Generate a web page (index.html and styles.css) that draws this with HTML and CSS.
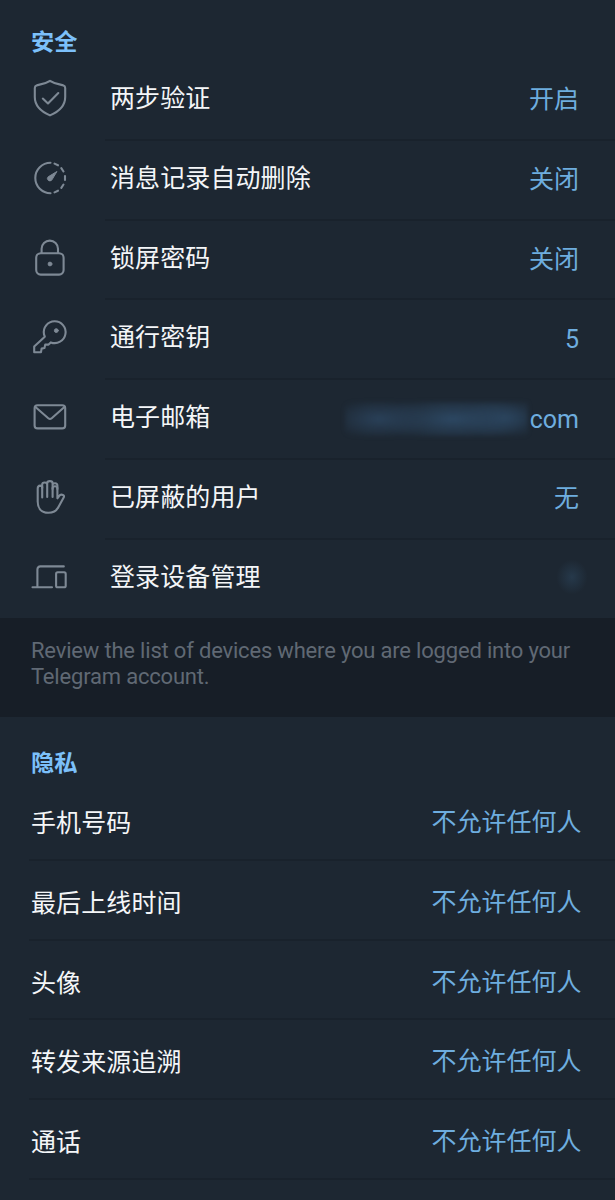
FILE: index.html
```html
<!DOCTYPE html>
<html lang="zh-CN">
<head>
  <meta charset="UTF-8" />
  <title>隐私和安全</title>
  <link rel="stylesheet" href="styles.css">
</head>
<body>

  <!-- SECURITY -->
  <section class="security">
    <h2>安全</h2>
    <div class="row">
      <svg class="icon" viewBox="0 0 40 40"><path d="M20 2.8C15 6.1 9.6 6.4 6.5 7.4Q4.8 8 4.8 10V19C4.8 28.5 12 34 20 37.4C28 34 35.2 28.5 35.2 19V10Q35.2 8 33.5 7.4C30.4 6.4 25 6.1 20 2.8Z"/><path d="M12.8 20.6L18 25.5L28.3 15"/></svg>
      <div class="line"><span class="label">两步验证</span><span class="value">开启</span></div>
    </div>
    <div class="row">
      <svg class="icon" viewBox="0 0 40 40"><path d="M20.5 4.8A15.2 15.2 0 1 0 20.5 35.2"/><path d="M24.5 5.6L28 7.3M31.3 10.2L33.5 13.5M35 18V22M33.5 26.5L31.3 29.8M28 32.7L24.5 34.4"/><path class="fill" d="M26.6 13.7L18.2 18.8A2.3 2.3 0 1 0 21.6 22.2Z"/></svg>
      <div class="line"><span class="label">消息记录自动删除</span><span class="value">关闭</span></div>
    </div>
    <div class="row">
      <svg class="icon" viewBox="0 0 40 40"><rect x="6.2" y="15.2" width="27.4" height="21.4" rx="4.5"/><path d="M11.6 15V10.8A8.2 8.2 0 0 1 28 10.8V15"/><circle class="fill" cx="20" cy="26" r="1.9"/></svg>
      <div class="line"><span class="label">锁屏密码</span><span class="value">关闭</span></div>
    </div>
    <div class="row">
      <svg class="icon" viewBox="0 0 40 40"><path d="M14 17.4A10.9 10.9 0 1 1 20.8 25.4L18.6 27.6H15.2L14.5 31L11.6 31.6L11 35.2H4.2V29.6L14.8 19.7Z"/><circle class="fill" cx="26.3" cy="13.6" r="1.9"/></svg>
      <div class="line"><span class="label">通行密钥</span><span class="value latin">5</span></div>
    </div>
    <div class="row">
      <svg class="icon" viewBox="0 0 40 40"><rect x="4.6" y="8.2" width="30.6" height="23.2" rx="3"/><path d="M5.4 10L18.3 21.2Q20 22.6 21.7 21.2L34.4 10"/></svg>
      <div class="line"><span class="label">电子邮箱</span><span class="value latin"><span class="hidden-mail"></span>com</span></div>
    </div>
    <div class="row">
      <svg class="icon" viewBox="0 0 40 40"><path d="M12.2 20.5V10.3Q12.2 8.6 10.2 8.6Q7.7 8.8 7.7 11.5V24.5C7.7 31.5 11.5 35.8 18.3 35.8C23.8 35.8 26.6 33.8 28.6 29.8L33.8 20.2C34.8 18 31.6 17 29.9 18.2L27.4 21.3V11.5C27.4 8.5 22.6 8.5 22.6 11.5V20"/><path d="M12.2 11V7.6C12.2 4.8 17.2 4.8 17.2 7.6V20M17.2 8V6.4C17.2 3.4 22.6 3.4 22.6 6.4V12M22.6 8C22.6 5.6 27.4 5.6 27.4 8.5V12"/></svg>
      <div class="line"><span class="label">已屏蔽的用户</span><span class="value">无</span></div>
    </div>
    <div class="row">
      <svg class="icon" viewBox="0 0 40 40"><path d="M33.8 9.4H10.4Q7.4 9.4 7.4 12.4V30M2.5 30.2H22"/><rect x="26.1" y="15.3" width="9.6" height="15" rx="1.6"/></svg>
      <div class="line"><span class="label">登录设备管理</span><span class="hidden-count"></span></div>
    </div>
  </section>

  <p class="note">Review the list of devices where you are logged into your Telegram account.</p>

  <!-- PRIVACY -->
  <section class="privacy">
    <h2>隐私</h2>
    <div class="row"><span class="label">手机号码</span><span class="value">不允许任何人</span></div>
    <div class="row"><span class="label">最后上线时间</span><span class="value">不允许任何人</span></div>
    <div class="row"><span class="label">头像</span><span class="value">不允许任何人</span></div>
    <div class="row"><span class="label">转发来源追溯</span><span class="value">不允许任何人</span></div>
    <div class="row"><span class="label">通话</span><span class="value">不允许任何人</span></div>
  </section>

</body>
</html>
```
FILE: styles.css
```css
* {
  box-sizing: border-box;
}
body {
  margin: 0;
  height: 1200px;
  overflow: hidden;
  background: #1d2732;
  color: #f4f6f8;
  font-family: Roboto, "Noto Sans CJK SC", sans-serif;
  font-size: 25px;
  line-height: 36px;
}
h2 {
  margin: 0;
  padding-left: 31px;
  color: #7cc0fa;
  font-size: 23.2px;
  font-weight: 700;
  line-height: 34px;
}
.security {
  height: 618px;
  padding-top: 25px;
}
.security h2 {
  height: 36px;
}
.security .row {
  display: flex;
  height: 79.75px;
}
.icon {
  flex: none;
  width: 40px;
  height: 40px;
  margin: 17px 35.5px 0 29.5px;
  fill: none;
  stroke: #7e8995;
  stroke-width: 2.1;
  stroke-linecap: round;
  stroke-linejoin: round;
}
.icon .fill {
  fill: #7e8995;
  stroke-width: 1;
}
.line {
  flex: 1;
  display: flex;
  justify-content: space-between;
  padding: 20px 36px 0 5px;
  border-bottom: 2px solid #19222c;
}
.row:last-child .line {
  border-bottom: none;
}
.label {
  letter-spacing: 0.1px;
}
.value {
  color: #6eaddf;
}
.security .value {
  padding-top: 1px;
}
.security .latin {
  display: flex;
  padding-top: 2px;
}
/* masked email address and device count */
.hidden-mail {
  width: 183px;
  height: 34px;
  margin: 0 2px 0 0;
  background:
    radial-gradient(ellipse 50px 21px at 34px 17px, #2a4159, transparent),
    radial-gradient(ellipse 75px 24px at 108px 17px, #2d4863, transparent),
    radial-gradient(ellipse 45px 21px at 160px 16px, #2a435c, transparent);
  filter: blur(2px);
}
.hidden-count {
  width: 34px;
  height: 38px;
  margin: -2px -10px 0 0;
  background: radial-gradient(ellipse at center, #26394b, transparent 65%);
}
.note {
  height: 99px;
  margin: 0;
  padding: 20px 31px 0;
  background: #171e27;
  color: #606974;
  font-size: 22px;
  letter-spacing: -0.19px;
  line-height: 26px;
}
.privacy {
  padding-top: 29px;
}
.privacy h2 {
  height: 35px;
}
.privacy .row {
  display: flex;
  justify-content: space-between;
  height: 79.75px;
  margin-left: 29px;
  padding: 25px 33.5px 0 2px;
  border-bottom: 2px solid #19222c;
}
.privacy .value {
  margin-top: -1px;
}
```
